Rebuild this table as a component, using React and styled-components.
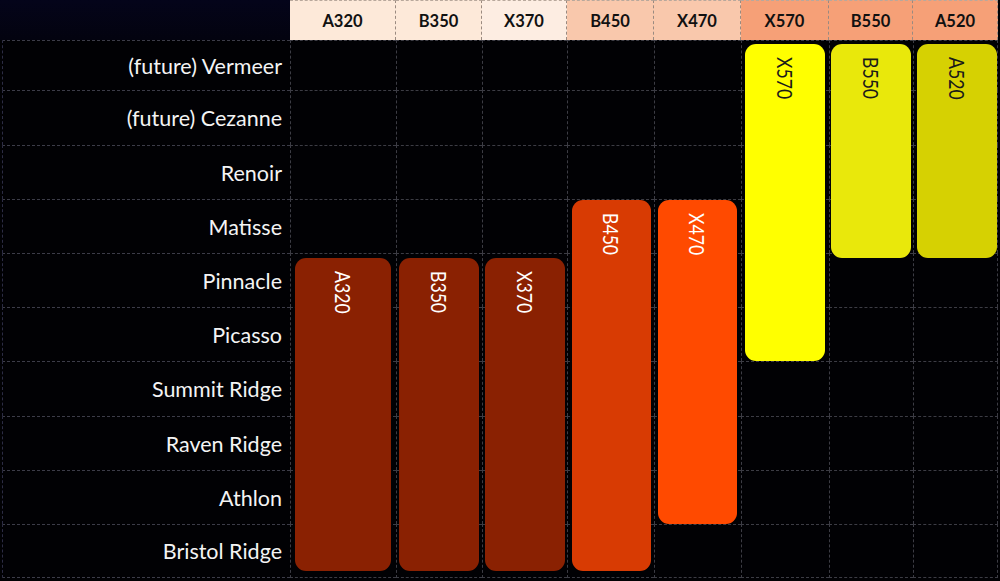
import React from "react";
import styled, { createGlobalStyle } from "styled-components";

const Global = createGlobalStyle`
  html, body { margin: 0; padding: 0; background: #000; }
  body { font-family: Lato, "Open Sans", sans-serif; }
`;

const COLS = [
  { name: "A320", w: 106, head: "#FDE9D9" },
  { name: "B350", w: 86, head: "#FDE9D9" },
  { name: "X370", w: 85, head: "#FDEDE2" },
  { name: "B450", w: 87, head: "#F9C8AC" },
  { name: "X470", w: 87, head: "#F9C8AC" },
  { name: "X570", w: 88, head: "#F6A077" },
  { name: "B550", w: 84, head: "#F6A077" },
  { name: "A520", w: 85, head: "#F6A077" },
];

const ROWS = [
  { name: "(future) Vermeer", h: 50 },
  { name: "(future) Cezanne", h: 55 },
  { name: "Renoir", h: 54 },
  { name: "Matisse", h: 54 },
  { name: "Pinnacle", h: 54 },
  { name: "Picasso", h: 54 },
  { name: "Summit Ridge", h: 55 },
  { name: "Raven Ridge", h: 54 },
  { name: "Athlon", h: 54 },
  { name: "Bristol Ridge", h: 54 },
];

// grid rows: line 1 top, line 2 after header, data row i (0-based) starts at line i+2
const BARS = [
  { label: "A320", col: 2, rows: "6 / 12", m: "5px 5px 7px 5px", bg: "#8A2102", fg: "#fff" },
  { label: "B350", col: 3, rows: "6 / 12", m: "5px 3px 7px 3px", bg: "#8A2102", fg: "#fff" },
  { label: "X370", col: 4, rows: "6 / 12", m: "5px 2px 7px 3px", bg: "#8A2102", fg: "#fff" },
  { label: "B450", col: 5, rows: "5 / 12", m: "1px 3px 7px 5px", bg: "#D83B03", fg: "#fff" },
  { label: "X470", col: 6, rows: "5 / 11", m: "1px 4px 0px 4px", bg: "#FF4A00", fg: "#fff" },
  { label: "X570", col: 7, rows: "2 / 8", m: "4px 4px 0px 4px", bg: "#FFFF00", fg: "#1a1a1a" },
  { label: "B550", col: 8, rows: "2 / 6", m: "4px 2px -5px 2px", bg: "#E9E80B", fg: "#1a1a1a" },
  { label: "A520", col: 9, rows: "2 / 6", m: "4px 1px -5px 4px", bg: "#D6D102", fg: "#1a1a1a" },
];

const Chart = styled.div`
  display: grid;
  grid-template-columns: 290px ${COLS.map((c) => `${c.w}px`).join(" ")};
  grid-template-rows: 40px ${ROWS.map((r) => `${r.h}px`).join(" ")};
  width: 1000px;
  height: 581px;
  background: #010104;
  overflow: hidden;
`;

const Corner = styled.div`
  grid-row: 1;
  grid-column: 1;
  background: linear-gradient(180deg, #04041a 0%, #03030f 100%);
`;

const HeadCell = styled.div`
  grid-row: 1;
  grid-column: ${(p) => p.$col};
  background: ${(p) => p.$bg};
  border-right: 1px dashed #9a8a80;
  border-top: 1px dashed #b8a89c;
  box-sizing: border-box;
  display: flex;
  align-items: center;
  justify-content: center;
  padding-top: 1px;
  font-family: Lato, "Open Sans", sans-serif;
  font-weight: 700;
  font-size: 16.5px;
  color: #111;
`;

const LabelCell = styled.div`
  grid-row: ${(p) => p.$row};
  grid-column: 1;
  box-sizing: border-box;
  border-top: 1px dashed #3c3c48;
  border-bottom: ${(p) => (p.$last ? "1px dashed #3c3c48" : "none")};
  border-left: 1px dashed #2c2c44;
  margin-left: 2px;
  display: flex;
  align-items: center;
  justify-content: flex-end;
  padding-right: 8px;
  font-family: Lato, "Open Sans", sans-serif;
  font-size: 21.5px;
  color: #f4f4f4;
  white-space: nowrap;
`;

const GridCell = styled.div`
  grid-row: ${(p) => p.$row};
  grid-column: ${(p) => p.$col};
  box-sizing: border-box;
  border-top: 1px dashed #3c3c44;
  border-left: 1px dashed #3c3c44;
  border-bottom: ${(p) => (p.$last ? "1px dashed #3c3c44" : "none")};
  border-right: ${(p) => (p.$lastCol ? "1px dashed #3c3c44" : "none")};
`;

const Bar = styled.div`
  grid-row: ${(p) => p.$rows};
  grid-column: ${(p) => p.$col};
  margin: ${(p) => p.$m};
  background: ${(p) => p.$bg};
  color: ${(p) => p.$fg};
  border-radius: 11px;
  z-index: 1;
  display: flex;
  justify-content: center;
  align-items: flex-start;
  padding-top: 13px;
`;

const BarText = styled.span`
  writing-mode: vertical-rl;
  font-family: Lato, "Open Sans", sans-serif;
  font-size: 21px;
  line-height: 1;
  transform: scaleY(0.84);
  transform-origin: top center;
`;

export default function App() {
  return (
    <>
      <Global />
      <Chart>
        <Corner />
        {COLS.map((c, i) => (
          <HeadCell key={c.name} $col={i + 2} $bg={c.head}>
            {c.name}
          </HeadCell>
        ))}
        {ROWS.map((r, ri) => (
          <React.Fragment key={r.name}>
            <LabelCell $row={ri + 2} $last={ri === ROWS.length - 1}>
              {r.name}
            </LabelCell>
            {COLS.map((c, ci) => (
              <GridCell
                key={c.name}
                $row={ri + 2}
                $col={ci + 2}
                $last={ri === ROWS.length - 1}
                $lastCol={ci === COLS.length - 1}
              />
            ))}
          </React.Fragment>
        ))}
        {BARS.map((b) => (
          <Bar key={b.label} $rows={b.rows} $col={b.col} $m={b.m} $bg={b.bg} $fg={b.fg}>
            <BarText>{b.label}</BarText>
          </Bar>
        ))}
      </Chart>
    </>
  );
}
